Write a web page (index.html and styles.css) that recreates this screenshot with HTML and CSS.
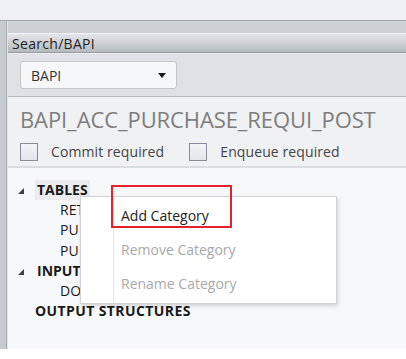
FILE: index.html
```html
<!DOCTYPE html>
<html>
<head>
<meta charset="utf-8">
<link rel="stylesheet" href="styles.css">
</head>
<body>
<div class="topbar"></div>
<div class="frame">
  <div class="side"></div>
  <div class="main">
    <div class="header">Search/BAPI</div>
    <div class="toolbar">
      <div class="dropdown"><span>BAPI</span><span class="caret"></span></div>
    </div>
    <div class="info">
      <div class="title">BAPI_ACC_PURCHASE_REQUI_POST</div>
      <div class="checks">
        <label class="check"><span class="box"></span>Commit required</label>
        <label class="check"><span class="box"></span>Enqueue required</label>
      </div>
    </div>
    <div class="tree">
      <div class="row node"><svg class="tri" width="6" height="6" viewBox="0 0 6 6"><polygon points="6,0 6,6 0,6" fill="#404040"/></svg><span class="hl">TABLES</span></div>
      <div class="row leaf">RET</div>
      <div class="row leaf">PU</div>
      <div class="row leaf">PU</div>
      <div class="row node"><svg class="tri" width="6" height="6" viewBox="0 0 6 6"><polygon points="6,0 6,6 0,6" fill="#404040"/></svg><span>INPUT</span></div>
      <div class="row leaf">DO</div>
      <div class="row node nochild"><span class="wide">OUTPUT STRUCTURES</span></div>

      <div class="menu">
        <div class="item">Add Category</div>
        <div class="item disabled">Remove Category</div>
        <div class="item disabled">Rename Category</div>
      </div>
      <div class="redbox"></div>
    </div>
  </div>
</div>
</body>
</html>
```
FILE: styles.css
```css
html, body {
  margin: 0;
  padding: 0;
}
body {
  background: #ffffff;
  font-family: "Open Sans", "Noto Sans", sans-serif;
  color: #1a1a1a;
  width: 406px;
  height: 359px;
  overflow: hidden;
}
.topbar {
  height: 20px;
  background: #eef0f3;
}
.frame {
  display: flex;
  height: 329px;
  border-top: 1px solid #a3a7ac;
  box-sizing: border-box;
  background: #cdd1d5;
}
.side {
  width: 6px;
  background: #c7cbd0;
  border-right: 1px solid #a7abb0;
  box-shadow: 1px 0 0 #e4e6e9;
}
.main {
  flex: 1;
  display: flex;
  flex-direction: column;
  padding-top: 12px;
  margin-left: 1px;
}
.header {
  height: 20px;
  box-sizing: border-box;
  padding-left: 4px;
  font-size: 14px;
  line-height: 19px;
  letter-spacing: 0.3px;
  color: #222;
  background: linear-gradient(#e3e5e8 0%, #d4d6d9 35%, #b7babd 100%);
  border-top: 1px solid #f2f3f4;
  border-bottom: 1px solid #9a9ea3;
}
.toolbar {
  height: 44px;
  box-sizing: border-box;
  padding: 7px 12px 0;
  background: #dfe1e4;
  border-top: 1px solid #eceef0;
  border-bottom: 1px solid #b5b8bc;
}
.dropdown {
  width: 157px;
  height: 28px;
  box-sizing: border-box;
  background: #f6f7f8;
  border: 1px solid #c4c6c9;
  border-radius: 3px;
  display: flex;
  align-items: center;
  justify-content: space-between;
  padding: 0 10px 0 10px;
  font-size: 14px;
  color: #333;
}
.caret {
  width: 0;
  height: 0;
  border-left: 4px solid transparent;
  border-right: 4px solid transparent;
  border-top: 5px solid #1a1a1a;
  margin-top: 1px;
}
.info {
  height: 71px;
  box-sizing: border-box;
  background: #f0f1f3;
  padding: 8px 12px 0;
  border-bottom: 2px solid #dadcdf;
}
.title {
  font-size: 22px;
  line-height: 28px;
  color: #7d7d7d;
  letter-spacing: -0.1px;
}
.checks {
  display: flex;
  gap: 25px;
  margin-top: 10px;
}
.check {
  display: flex;
  align-items: center;
  gap: 13px;
  font-size: 14px;
  color: #444;
  line-height: 18px;
  letter-spacing: 0.1px;
}
.box {
  width: 18px;
  height: 18px;
  box-sizing: border-box;
  border: 1px solid #8a8c9a;
  background: linear-gradient(#f2f3f6, #e3e5ea);
}
.tree {
  flex: 1;
  position: relative;
  background: #f7f8fa;
  padding-top: 12px;
}
.row {
  height: 20.2px;
  line-height: 20px;
  font-size: 14px;
  white-space: nowrap;
}
.node {
  font-weight: 700;
  display: flex;
  align-items: center;
  padding-left: 10px;
}
.node .tri {
  margin-right: 11px;
  margin-top: 2px;
}
.node span {
  padding: 0 2px;
}
.node span.wide {
  letter-spacing: 0.4px;
}
.nochild {
  padding-left: 25px;
}
.hl {
  background: #ececee;
}
.leaf {
  padding-left: 52px;
}
.menu {
  position: absolute;
  left: 72px;
  top: 28px;
  width: 257px;
  box-sizing: border-box;
  background: #ffffff;
  border: 1px solid #d0d2d5;
  box-shadow: 1px 2px 4px rgba(0,0,0,0.15);
  padding: 2px 0 2px 0;
  background-image: linear-gradient(to right, transparent 32px, #e2e3e5 32px, #e2e3e5 33px, transparent 33px);
}
.item {
  height: 34px;
  line-height: 34px;
  padding-left: 40px;
  font-size: 14px;
  color: #222;
}
.item.disabled {
  color: #a9a9a9;
}
.redbox {
  position: absolute;
  left: 103px;
  top: 17px;
  width: 121px;
  height: 43px;
  box-sizing: border-box;
  border: 2px solid #e5212b;
}
```
